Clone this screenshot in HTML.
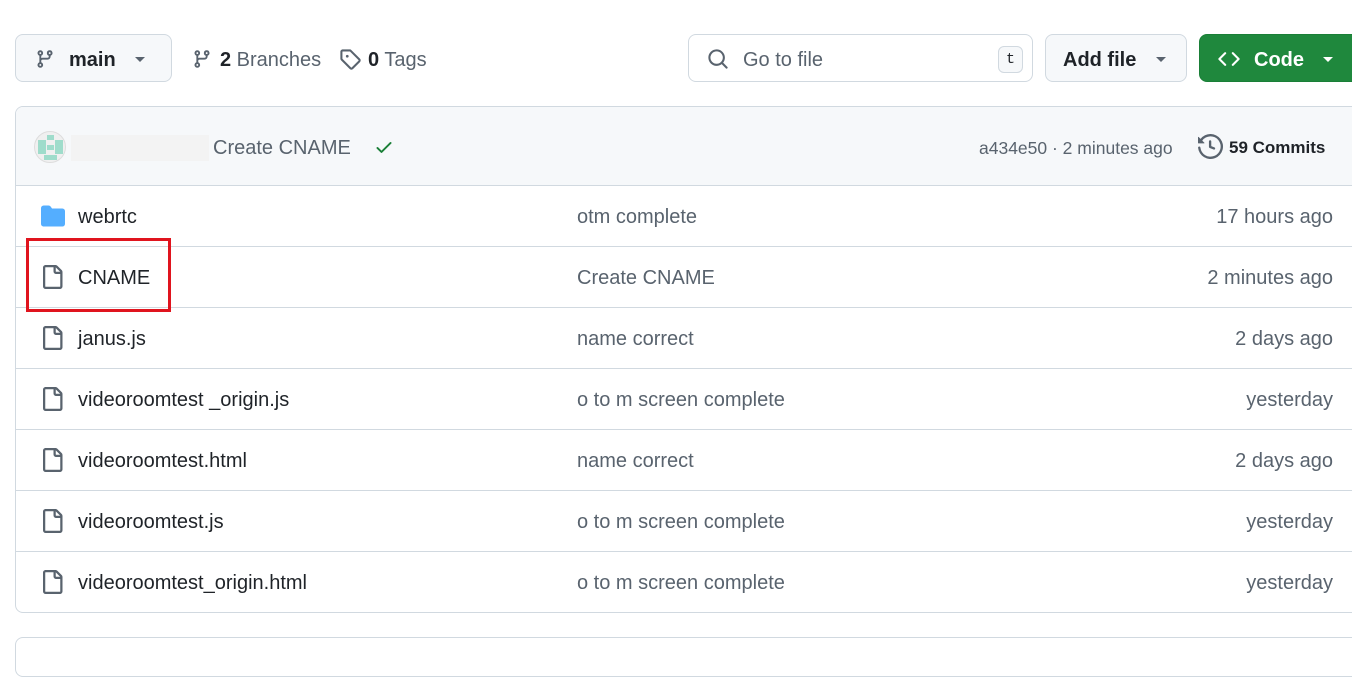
<!DOCTYPE html>
<html><head><meta charset="utf-8"><style>
*{box-sizing:border-box;margin:0;padding:0}
body{width:1352px;height:645px;overflow:hidden;background:#fff;font-family:"Liberation Sans","DejaVu Sans",sans-serif;color:#1f2328;position:relative}
.a{position:absolute}
.btn{position:absolute;border:1px solid #d1d9e0;border-radius:8px;background:#f6f8fa;height:48px;top:34px}
.t{position:absolute;font-size:20px;white-space:nowrap}
.row{position:absolute;left:16px;width:1340px;height:61px;border-top:1px solid #d1d9e0}
.row .n{left:62px;top:20px;color:#1f2328}
.row .m{left:561px;top:20px;color:#59636e}
.row .d{right:23px;top:20px;color:#59636e}
.row svg{position:absolute;left:24px;top:18px}
</style></head><body>
<div class="btn" style="left:15px;width:157px"></div>
<svg class="a" style="left:35px;top:48px" width="20" height="22" viewBox="0 0 16 16" fill="#59636e"><path d="M9.5 3.25a2.25 2.25 0 1 1 3 2.122V6A2.5 2.5 0 0 1 10 8.5H6a1 1 0 0 0-1 1v1.128a2.251 2.251 0 1 1-1.5 0V5.372a2.25 2.25 0 1 1 1.5 0v1.836A2.493 2.493 0 0 1 6 7h4a1 1 0 0 0 1-1v-.628A2.25 2.25 0 0 1 9.5 3.25Zm-6 0a.75.75 0 1 0 1.5 0 .75.75 0 0 0-1.5 0Zm8.25-.75a.75.75 0 1 0 0 1.5.75.75 0 0 0 0-1.5ZM4.25 12a.75.75 0 1 0 0 1.5.75.75 0 0 0 0-1.5Z"/></svg>
<div class="t" style="left:69px;top:49px;font-weight:bold">main</div>
<div class="a" style="left:135px;top:57px;border:5px solid transparent;border-top:5px solid #59636e"></div>
<svg class="a" style="left:192px;top:48px" width="20" height="22" viewBox="0 0 16 16" fill="#59636e"><path d="M9.5 3.25a2.25 2.25 0 1 1 3 2.122V6A2.5 2.5 0 0 1 10 8.5H6a1 1 0 0 0-1 1v1.128a2.251 2.251 0 1 1-1.5 0V5.372a2.25 2.25 0 1 1 1.5 0v1.836A2.493 2.493 0 0 1 6 7h4a1 1 0 0 0 1-1v-.628A2.25 2.25 0 0 1 9.5 3.25Zm-6 0a.75.75 0 1 0 1.5 0 .75.75 0 0 0-1.5 0Zm8.25-.75a.75.75 0 1 0 0 1.5.75.75 0 0 0 0-1.5ZM4.25 12a.75.75 0 1 0 0 1.5.75.75 0 0 0 0-1.5Z"/></svg>
<div class="t" style="left:220px;top:49px;color:#59636e"><b style="color:#1f2328">2</b> Branches</div>
<svg class="a" style="left:339px;top:48px" width="22" height="22" viewBox="0 0 16 16" fill="#59636e"><path d="M1 7.775V2.75C1 1.784 1.784 1 2.750 1h5.025c.464 0 .91.184 1.238.513l6.25 6.25a1.75 1.75 0 0 1 0 2.474l-5.026 5.026a1.75 1.75 0 0 1-2.474 0l-6.25-6.25A1.752 1.752 0 0 1 1 7.775Zm1.5 0c0 .066.026.13.073.177l6.25 6.25a.25.25 0 0 0 .354 0l5.025-5.025a.25.25 0 0 0 0-.354l-6.25-6.25a.25.25 0 0 0-.177-.073H2.75a.25.25 0 0 0-.25.25ZM6 5a1 1 0 1 1 0 2 1 1 0 0 1 0-2Z"/></svg>
<div class="t" style="left:368px;top:49px;color:#59636e"><b style="color:#1f2328">0</b> Tags</div>

<div class="btn" style="left:688px;width:345px;background:#fff"></div>
<svg class="a" style="left:707px;top:48px" width="22" height="22" viewBox="0 0 16 16" fill="#59636e"><path d="M10.68 11.74a6 6 0 0 1-7.922-8.982 6 6 0 0 1 8.982 7.922l3.04 3.04a.749.749 0 1 1-1.06 1.06ZM11.5 7a4.499 4.499 0 1 0-8.997 0A4.499 4.499 0 0 0 11.5 7Z"/></svg>
<div class="t" style="left:743px;top:49px;color:#59636e">Go to file</div>
<div class="a" style="left:998px;top:46px;width:25px;height:27px;border:1px solid #d1d9e0;border-radius:6px;background:#f6f8fa;font-family:'Liberation Mono',monospace;font-size:15px;text-align:center;line-height:25px;color:#1f2328">t</div>

<div class="btn" style="left:1045px;width:142px"></div>
<div class="t" style="left:1063px;top:49px;font-weight:bold">Add file</div>
<div class="a" style="left:1156px;top:57px;border:5px solid transparent;border-top:5px solid #59636e"></div>

<div class="btn" style="left:1199px;width:170px;background:#1f883d;border-color:#1a7f37"></div>
<svg class="a" style="left:1218px;top:48px" width="22" height="22" viewBox="0 0 16 16" fill="#fff"><path d="m11.28 3.22 4.25 4.25a.75.75 0 0 1 0 1.06l-4.25 4.25a.749.749 0 0 1-1.275-.326.749.749 0 0 1 .215-.734L13.94 8l-3.72-3.720a.749.749 0 0 1 .326-1.275.749.749 0 0 1 .734.215Zm-6.56 0a.751.751 0 0 1 1.042.018.751.751 0 0 1 .018 1.042L2.06 8l3.72 3.72a.749.749 0 0 1-.326 1.275.749.749 0 0 1-.734-.215L.47 8.53a.75.75 0 0 1 0-1.06Z"/></svg>
<div class="t" style="left:1254px;top:49px;font-weight:bold;color:#fff">Code</div>
<div class="a" style="left:1323px;top:57px;border:5px solid transparent;border-top:5px solid #fff"></div>

<div class="a" style="left:15px;top:106px;width:1360px;height:507px;border:1px solid #d1d9e0;border-radius:8px;overflow:hidden">
 <div class="a" style="left:0;top:0;width:100%;height:79px;background:#f6f8fa"></div>
</div>
<div class="a" style="left:34px;top:131px;width:32px;height:32px;border-radius:50%;background:#f0f0f0;border:1px solid #ddd;overflow:hidden">
 <div class="a" style="left:3px;top:8px;width:8px;height:14px;background:#9fdccb"></div>
 <div class="a" style="left:20px;top:8px;width:8px;height:14px;background:#9fdccb"></div>
 <div class="a" style="left:12px;top:3px;width:7px;height:5px;background:#9fdccb"></div>
 <div class="a" style="left:12px;top:13px;width:7px;height:5px;background:#9fdccb"></div>
 <div class="a" style="left:9px;top:23px;width:13px;height:5px;background:#9fdccb"></div>
</div>
<div class="a" style="left:71px;top:135px;width:138px;height:26px;background:#f3f3f3"></div>
<div class="t" style="left:213px;top:137px;color:#59636e">Create CNAME</div>
<svg class="a" style="left:374px;top:137px" width="20" height="20" viewBox="0 0 16 16" fill="#1a7f37"><path d="M13.78 4.22a.75.75 0 0 1 0 1.06l-7.25 7.25a.75.75 0 0 1-1.06 0L2.22 9.28a.751.751 0 0 1 .018-1.042.751.751 0 0 1 1.042-.018L6 10.94l6.72-6.72a.75.75 0 0 1 1.06 0Z"/></svg>
<div class="t" style="left:979px;top:138px;font-size:17.5px;color:#59636e">a434e50 · 2 minutes ago</div>
<svg class="a" style="left:1198px;top:134px" width="25" height="25" viewBox="0 0 16 16" fill="#59636e"><path d="m.427 1.927 1.215 1.215a8.002 8.002 0 1 1-1.6 5.685.75.75 0 1 1 1.493-.154 6.5 6.5 0 1 0 1.18-4.458l1.358 1.358A.25.25 0 0 1 3.896 6H.25A.25.25 0 0 1 0 5.75V2.104a.25.25 0 0 1 .427-.177ZM7.75 4a.75.75 0 0 1 .75.75v2.992l2.028.812a.75.75 0 0 1-.557 1.392l-2.5-1A.751.751 0 0 1 7 8.25v-3.5A.75.75 0 0 1 7.75 4Z"/></svg>
<div class="t" style="left:1229px;top:138px;font-size:17px;font-weight:bold">59 Commits</div>

<div class="row" style="top:185px"><svg width="26" height="24" viewBox="0 0 16 16" fill="#54aeff"><path d="M1.75 1A1.75 1.75 0 0 0 0 2.75v10.5C0 14.216.784 15 1.75 15h12.5A1.75 1.75 0 0 0 16 13.25v-8.5A1.75 1.75 0 0 0 14.25 3H7.5a.25.25 0 0 1-.2-.1l-.9-1.2C6.07 1.26 5.55 1 5 1H1.75Z"/></svg><div class="t n">webrtc</div><div class="t m">otm complete</div><div class="t d">17 hours ago</div></div>
<div class="row" style="top:246px"><svg width="24" height="24" viewBox="0 0 16 16" fill="#59636e"><path d="M2 1.75C2 .784 2.784 0 3.75 0h6.586c.464 0 .909.184 1.237.513l2.914 2.914c.329.328.513.773.513 1.237v9.586A1.75 1.75 0 0 1 13.25 16h-9.5A1.75 1.75 0 0 1 2 14.25Zm1.75-.25a.25.25 0 0 0-.25.25v12.5c0 .138.112.25.25.25h9.5a.25.25 0 0 0 .25-.25V6h-2.75A1.75 1.75 0 0 1 9 4.25V1.5Zm6.75.062V4.25c0 .138.112.25.25.25h2.688l-.011-.013-2.914-2.914-.013-.011Z"/></svg><div class="t n">CNAME</div><div class="t m">Create CNAME</div><div class="t d">2 minutes ago</div></div>
<div class="row" style="top:307px"><svg width="24" height="24" viewBox="0 0 16 16" fill="#59636e"><path d="M2 1.75C2 .784 2.784 0 3.75 0h6.586c.464 0 .909.184 1.237.513l2.914 2.914c.329.328.513.773.513 1.237v9.586A1.75 1.75 0 0 1 13.25 16h-9.5A1.75 1.75 0 0 1 2 14.25Zm1.75-.25a.25.25 0 0 0-.25.25v12.5c0 .138.112.25.25.25h9.5a.25.25 0 0 0 .25-.25V6h-2.75A1.75 1.75 0 0 1 9 4.25V1.5Zm6.75.062V4.25c0 .138.112.25.25.25h2.688l-.011-.013-2.914-2.914-.013-.011Z"/></svg><div class="t n">janus.js</div><div class="t m">name correct</div><div class="t d">2 days ago</div></div>
<div class="row" style="top:368px"><svg width="24" height="24" viewBox="0 0 16 16" fill="#59636e"><path d="M2 1.75C2 .784 2.784 0 3.75 0h6.586c.464 0 .909.184 1.237.513l2.914 2.914c.329.328.513.773.513 1.237v9.586A1.75 1.75 0 0 1 13.25 16h-9.5A1.75 1.75 0 0 1 2 14.25Zm1.75-.25a.25.25 0 0 0-.25.25v12.5c0 .138.112.25.25.25h9.5a.25.25 0 0 0 .25-.25V6h-2.75A1.75 1.75 0 0 1 9 4.25V1.5Zm6.75.062V4.25c0 .138.112.25.25.25h2.688l-.011-.013-2.914-2.914-.013-.011Z"/></svg><div class="t n">videoroomtest _origin.js</div><div class="t m">o to m screen complete</div><div class="t d">yesterday</div></div>
<div class="row" style="top:429px"><svg width="24" height="24" viewBox="0 0 16 16" fill="#59636e"><path d="M2 1.75C2 .784 2.784 0 3.75 0h6.586c.464 0 .909.184 1.237.513l2.914 2.914c.329.328.513.773.513 1.237v9.586A1.75 1.75 0 0 1 13.25 16h-9.5A1.75 1.75 0 0 1 2 14.25Zm1.75-.25a.25.25 0 0 0-.25.25v12.5c0 .138.112.25.25.25h9.5a.25.25 0 0 0 .25-.25V6h-2.75A1.75 1.75 0 0 1 9 4.25V1.5Zm6.75.062V4.25c0 .138.112.25.25.25h2.688l-.011-.013-2.914-2.914-.013-.011Z"/></svg><div class="t n">videoroomtest.html</div><div class="t m">name correct</div><div class="t d">2 days ago</div></div>
<div class="row" style="top:490px"><svg width="24" height="24" viewBox="0 0 16 16" fill="#59636e"><path d="M2 1.75C2 .784 2.784 0 3.75 0h6.586c.464 0 .909.184 1.237.513l2.914 2.914c.329.328.513.773.513 1.237v9.586A1.75 1.75 0 0 1 13.25 16h-9.5A1.75 1.75 0 0 1 2 14.25Zm1.75-.25a.25.25 0 0 0-.25.25v12.5c0 .138.112.25.25.25h9.5a.25.25 0 0 0 .25-.25V6h-2.75A1.75 1.75 0 0 1 9 4.25V1.5Zm6.75.062V4.25c0 .138.112.25.25.25h2.688l-.011-.013-2.914-2.914-.013-.011Z"/></svg><div class="t n">videoroomtest.js</div><div class="t m">o to m screen complete</div><div class="t d">yesterday</div></div>
<div class="row" style="top:551px"><svg width="24" height="24" viewBox="0 0 16 16" fill="#59636e"><path d="M2 1.75C2 .784 2.784 0 3.75 0h6.586c.464 0 .909.184 1.237.513l2.914 2.914c.329.328.513.773.513 1.237v9.586A1.75 1.75 0 0 1 13.25 16h-9.5A1.75 1.75 0 0 1 2 14.25Zm1.75-.25a.25.25 0 0 0-.25.25v12.5c0 .138.112.25.25.25h9.5a.25.25 0 0 0 .25-.25V6h-2.75A1.75 1.75 0 0 1 9 4.25V1.5Zm6.75.062V4.25c0 .138.112.25.25.25h2.688l-.011-.013-2.914-2.914-.013-.011Z"/></svg><div class="t n">videoroomtest_origin.html</div><div class="t m">o to m screen complete</div><div class="t d">yesterday</div></div>

<div class="a" style="left:26px;top:238px;width:145px;height:74px;border:3px solid #e0141e"></div>
<div class="a" style="left:15px;top:637px;width:1360px;height:40px;border:1px solid #d1d9e0;border-radius:8px"></div>
</body></html>
